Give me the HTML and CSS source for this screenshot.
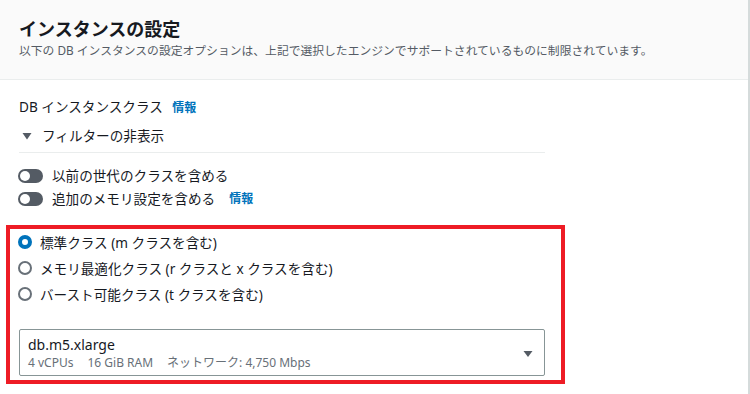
FILE: index.html
```html
<!DOCTYPE html>
<html lang="ja">
<head>
    <meta charset="UTF-8">
    <meta name="viewport" content="width=device-width, initial-scale=1.0">
    <title>インスタンスの設定</title>
    <link rel="stylesheet" href="styles.css">
</head>
<body>
    <div class="panel">
        <div class="panel-header">
            <h2 class="panel-title">インスタンスの設定</h2>
            <p class="panel-desc">以下の DB インスタンスの設定オプションは、上記で選択したエンジンでサポートされているものに制限されています。</p>
        </div>

        <div class="panel-body">
            <div class="field-label">DB インスタンスクラス <a href="#" class="info">情報</a></div>

            <div class="filter-toggle">
                <svg class="caret" width="16" height="16" viewBox="0 0 16 16"><path d="M3.5 5h9l-4.5 6.5z" fill="#545b64"/></svg>
                <span>フィルターの非表示</span>
            </div>

            <div class="filters">
                <label class="toggle-row">
                    <span class="switch"><span class="knob"></span></span>
                    <span>以前の世代のクラスを含める</span>
                </label>
                <label class="toggle-row">
                    <span class="switch"><span class="knob"></span></span>
                    <span>追加のメモリ設定を含める</span>
                    <a href="#" class="info">情報</a>
                </label>
            </div>

            <div class="highlight">
                <div class="radio-group">
                    <label class="radio-row">
                        <span class="radio checked"></span>
                        <span>標準クラス (m クラスを含む)</span>
                    </label>
                    <label class="radio-row">
                        <span class="radio"></span>
                        <span>メモリ最適化クラス (r クラスと x クラスを含む)</span>
                    </label>
                    <label class="radio-row">
                        <span class="radio"></span>
                        <span>バースト可能クラス (t クラスを含む)</span>
                    </label>
                </div>

                <div class="select">
                    <div class="select-text">
                        <div class="select-value">db.m5.xlarge</div>
                        <div class="select-tags">
                            <span>4 vCPUs</span>
                            <span>16 GiB RAM</span>
                            <span>ネットワーク: 4,750 Mbps</span>
                        </div>
                    </div>
                    <svg class="select-caret" width="10" height="8" viewBox="0 0 10 8"><path d="M0.5 1h9l-4.5 6z" fill="#545b64"/></svg>
                </div>
            </div>
        </div>
    </div>
</body>
</html>
```

FILE: styles.css
```css
body {
    margin: 0;
    padding: 0;
    background-color: #ffffff;
    font-family: "Noto Sans", "Noto Sans CJK JP", sans-serif;
    color: #16191f;
}

.panel {
    width: 748px;
    height: 394px;
    border-right: 2px solid #d5dbdb;
    overflow: hidden;
}

.panel-header {
    height: 80px;
    box-sizing: border-box;
    background-color: #fafafa;
    border-bottom: 1px solid #eaeded;
    padding: 18px 19px 0;
}

.panel-title {
    margin: 0;
    font-size: 18px;
    line-height: 22px;
    font-weight: bold;
}

.panel-desc {
    margin: 2px 0 0;
    font-size: 11.8px;
    line-height: 16px;
    color: #545b64;
}

.panel-body {
    width: 526px;
    padding: 0 19px;
}

.field-label {
    margin-top: 17px;
    font-size: 13.6px;
    line-height: 20px;
}

.info {
    margin-left: 6px;
    font-size: 12px;
    font-weight: bold;
    color: #0073bb;
    text-decoration: none;
}

.filter-toggle {
    display: flex;
    align-items: center;
    gap: 7px;
    margin-top: 8px;
    padding-bottom: 6px;
    border-bottom: 1px solid #eaeded;
    font-size: 13.6px;
    line-height: 20px;
}

.filters {
    display: flex;
    flex-direction: column;
    gap: 3px;
    margin-top: 13px;
}

.toggle-row {
    display: flex;
    align-items: center;
    gap: 9px;
    margin-left: -1px;
    font-size: 13.6px;
    line-height: 20px;
}

.toggle-row .info {
    margin-left: 5px;
}

.switch {
    width: 25px;
    height: 14px;
    border-radius: 7px;
    background-color: #545b64;
    display: flex;
    align-items: center;
    padding: 0 2px;
    box-sizing: border-box;
}

.knob {
    width: 10px;
    height: 10px;
    border-radius: 50%;
    background-color: #ffffff;
}

/* recuadro rojo de anotación */
.highlight {
    margin: 16px -20px 0 -13px;
    padding: 0 16px 4px 9px;
    border: 4px solid #ee1c25;
}

.radio-group {
    display: flex;
    flex-direction: column;
}

.radio-row {
    display: flex;
    align-items: center;
    gap: 8px;
    height: 26px;
    font-size: 13.6px;
}

.radio {
    width: 14px;
    height: 14px;
    box-sizing: border-box;
    border-radius: 50%;
    border: 2px solid #687078;
    background-color: #ffffff;
    margin-left: -1px;
}

.radio.checked {
    border: 4px solid #0073bb;
}

.select {
    margin-top: 22px;
    height: 47px;
    box-sizing: border-box;
    border: 1px solid #879596;
    border-radius: 2px;
    padding: 6px 11px 0 8px;
    display: flex;
    justify-content: space-between;
    align-items: center;
}

.select-text {
    align-self: flex-start;
}

.select-value {
    font-size: 14px;
    line-height: 18px;
}

.select-tags {
    display: flex;
    gap: 14px;
    margin-top: 1px;
    font-size: 12px;
    line-height: 16px;
    color: #687078;
}

.select-caret {
    margin-top: -4px;
}
```
